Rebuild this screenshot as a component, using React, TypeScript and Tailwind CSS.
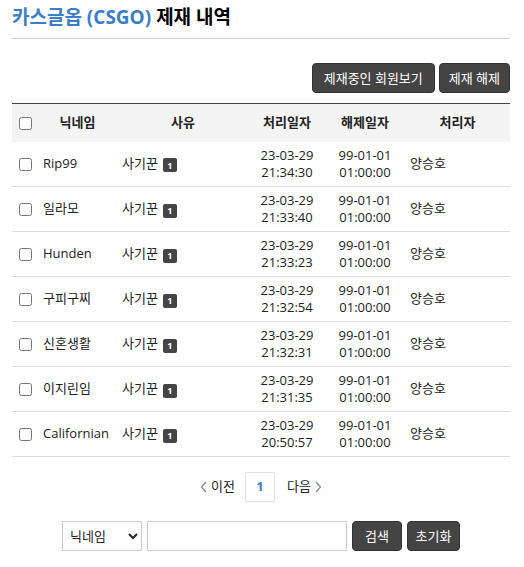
import React from 'react';

const rows = [
  { name: 'Rip99', date: '23-03-29', time: '21:34:30' },
  { name: '일라모', date: '23-03-29', time: '21:33:40' },
  { name: 'Hunden', date: '23-03-29', time: '21:33:23' },
  { name: '구피구찌', date: '23-03-29', time: '21:32:54' },
  { name: '신혼생활', date: '23-03-29', time: '21:32:31' },
  { name: '이지린임', date: '23-03-29', time: '21:31:35' },
  { name: 'Californian', date: '23-03-29', time: '20:50:57' },
];

const font = { fontFamily: '"Open Sans", "Noto Sans CJK KR", sans-serif' };

const Check = () => (
  <input type="checkbox" className="w-[13px] h-[13px] m-0 align-middle accent-[#444]" />
);

const App = () => {
  return (
    <div className="w-[524px] min-h-[567px] bg-white text-[#222] text-[13px]" style={font}>
      <div className="px-[12px]">
        {/* Title */}
        <div className="pt-[5px] pb-[8px] border-b border-[#ccc] w-[498px]">
          <h1 className="text-[19px] font-bold leading-[25px]">
            <span className="text-[#3b7dc6]">카스글옵 (CSGO)</span>{' '}
            <span className="text-black">제재 내역</span>
          </h1>
        </div>

        {/* Action buttons */}
        <div className="flex justify-end gap-[4px] mt-[24px] w-[498px]">
          <button className="h-[30px] px-[11px] bg-[#444] text-white rounded-[4px] border border-[#333] text-[13px] leading-none">
            제재중인 회원보기
          </button>
          <button className="h-[30px] px-[9px] bg-[#444] text-white rounded-[4px] border border-[#333] text-[13px] leading-none">
            제재 해제
          </button>
        </div>

        {/* Table */}
        <table className="mt-[10px] w-[498px] border-collapse table-fixed border-t border-[#444]">
          <colgroup>
            <col className="w-[26px]" />
            <col className="w-[79px]" />
            <col className="w-[132px]" />
            <col className="w-[76px]" />
            <col className="w-[80px]" />
            <col />
          </colgroup>
          <thead>
            <tr className="bg-[#f4f4f4] h-[38px]">
              <th className="text-center p-0"><Check /></th>
              <th className="font-bold text-center p-0">닉네임</th>
              <th className="font-bold text-center p-0">사유</th>
              <th className="font-bold text-center p-0">처리일자</th>
              <th className="font-bold text-center p-0">해제일자</th>
              <th className="font-bold text-center p-0">처리자</th>
            </tr>
          </thead>
          <tbody>
            {rows.map((r) => (
              <tr key={r.name} className="border-b border-[#ddd] h-[45px]">
                <td className="text-center p-0"><Check /></td>
                <td className="px-[5px] whitespace-nowrap">{r.name}</td>
                <td className="px-[5px]">
                  <span className="inline-flex items-center gap-[5px]">
                    사기꾼
                    <span className="inline-flex items-center justify-center w-[14px] h-[14px] rounded-[2px] bg-[#444] text-white text-[9px] font-bold mt-[3px] leading-none">
                      1
                    </span>
                  </span>
                </td>
                <td className="text-center leading-[17px] py-[5px]">
                  {r.date}
                  <br />
                  {r.time}
                </td>
                <td className="text-center leading-[17px] py-[5px]">
                  99-01-01
                  <br />
                  01:00:00
                </td>
                <td className="px-[5px]">양승호</td>
              </tr>
            ))}
          </tbody>
        </table>

        {/* Pagination */}
        <div className="flex items-center justify-center mt-[15px] w-[498px] text-[13px]">
          <span className="flex items-center gap-[3px] pr-[10px]">
            <svg width="8" height="12" viewBox="0 0 8 12" fill="none" stroke="#888" strokeWidth="1.3">
              <path d="M6 1 L1.5 6 L6 11" />
            </svg>
            이전
          </span>
          <span className="w-[30px] h-[30px] border border-[#e2e2e2] flex items-center justify-center text-[#3b7dc6] font-bold">
            1
          </span>
          <span className="flex items-center gap-[3px] pl-[12px]">
            다음
            <svg width="8" height="12" viewBox="0 0 8 12" fill="none" stroke="#888" strokeWidth="1.3">
              <path d="M2 1 L6.5 6 L2 11" />
            </svg>
          </span>
        </div>

        {/* Search */}
        <div className="flex items-center justify-center gap-[5px] mt-[19px] w-[498px]">
          <select className="w-[80px] h-[30px] border border-[#ccc] bg-white text-[13px] px-[3px]">
            <option>닉네임</option>
          </select>
          <input className="w-[200px] h-[30px] border border-[#ccc] px-[4px]" />
          <button className="h-[30px] w-[50px] bg-[#444] text-white rounded-[4px] border border-[#333] text-[13px] leading-none">
            검색
          </button>
          <button className="h-[30px] w-[53px] bg-[#444] text-white rounded-[4px] border border-[#333] text-[13px] leading-none">
            초기화
          </button>
        </div>
      </div>
    </div>
  );
};

export default App;
